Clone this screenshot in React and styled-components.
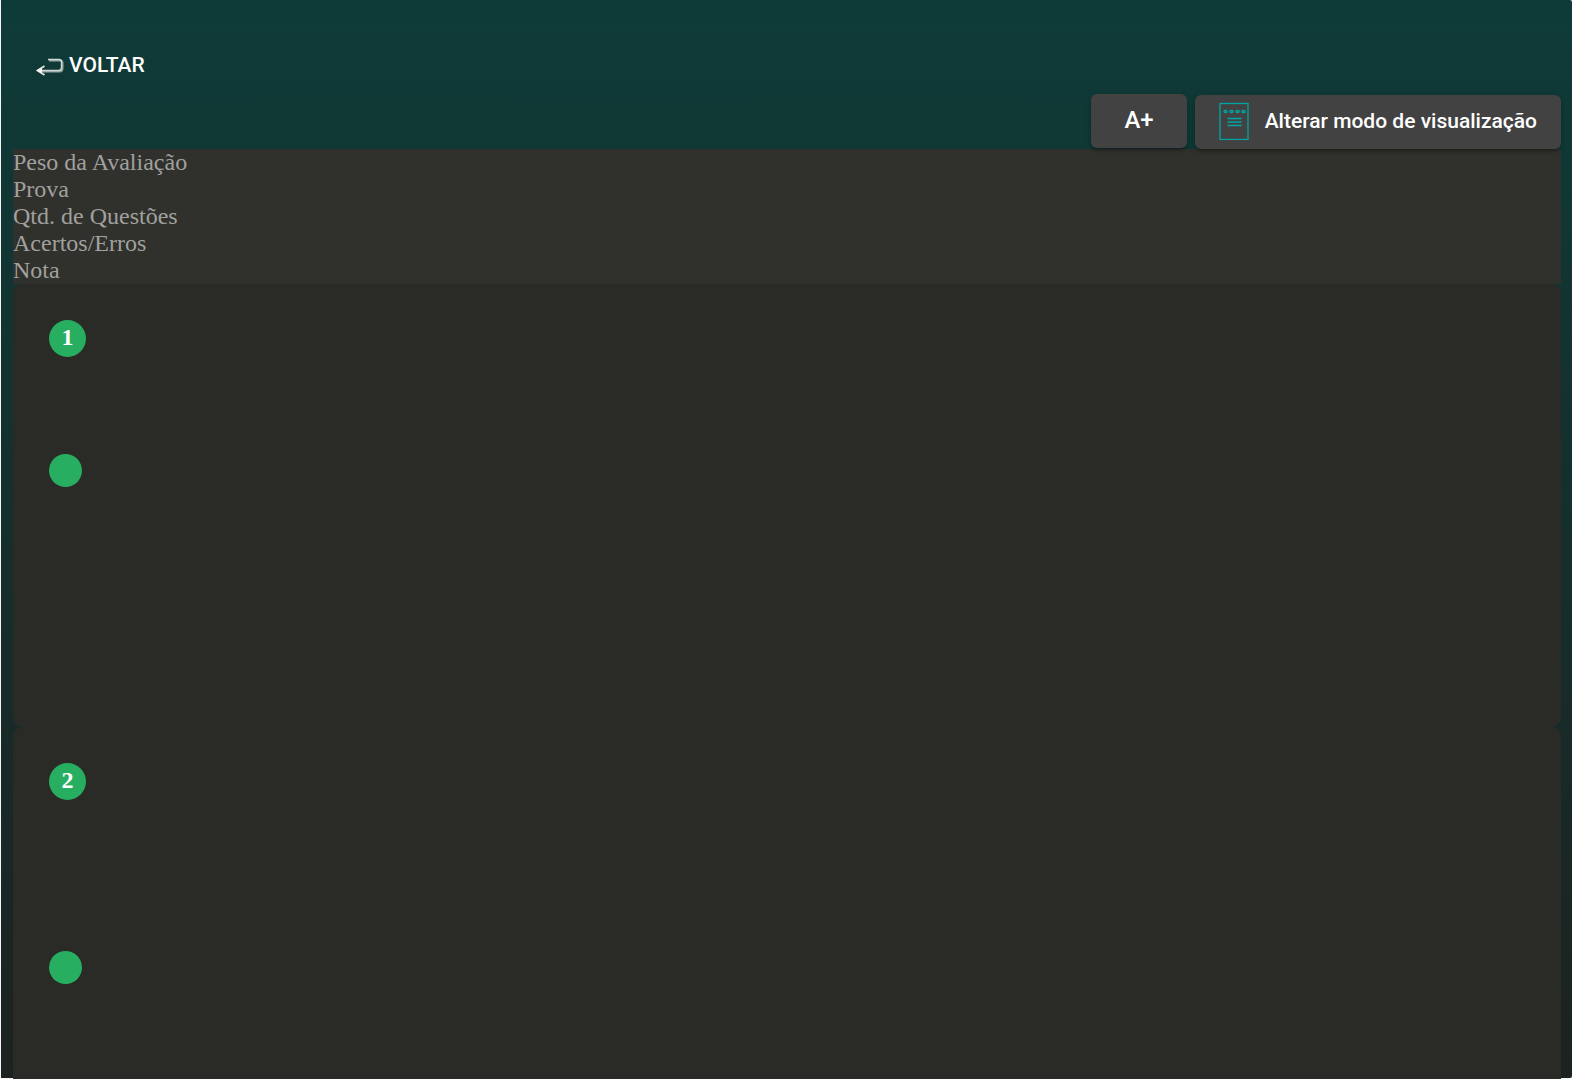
import React from 'react';
import styled, { createGlobalStyle } from 'styled-components';

const GlobalStyle = createGlobalStyle`
  * {
    box-sizing: border-box;
  }

  body {
    margin: 0;
    height: 100vh;
    overflow: hidden;
    background: #f5f5f5;
    font-family: 'Liberation Serif', serif;
  }
`;

const Page = styled.main`
  height: calc(100vh - 1px);
  margin-left: 1px;
  padding: 36px 11px 0 12px;
  border-radius: 0 2px 2px 0;
  background: linear-gradient(#0e3b38, #1c2221);
`;

const BackButton = styled.button`
  display: flex;
  align-items: center;
  gap: 5px;
  height: 58px;
  padding: 0 23px;
  border: none;
  background: transparent;
  color: #fff;
  font: 500 21px Roboto, sans-serif;
  cursor: pointer;
`;

const BackIcon = styled.svg`
  width: 28px;
  height: 20px;
  margin-top: 4px;
`;

const Toolbar = styled.div`
  display: flex;
  justify-content: flex-end;
  align-items: flex-end;
  gap: 8px;
  height: 55px;
`;

const RaisedButton = styled.button`
  display: flex;
  align-items: center;
  gap: 15px;
  height: 54px;
  padding: ${(props) => (props.$large ? '0 33px 2px' : '0 24px 2px')};
  ${(props) => props.$large && 'align-self: flex-start;'}
  border: none;
  border-radius: 6px;
  background: #424242;
  color: #fff;
  font: 500 ${(props) => (props.$large ? '24px' : '21px')} Roboto, sans-serif;
  box-shadow: 0 4px 2px -3px rgba(0, 0, 0, 0.2), 0 3px 3px rgba(0, 0, 0, 0.14),
    0 2px 7px rgba(0, 0, 0, 0.12);
  position: relative;
  cursor: pointer;
`;

const Summary = styled.section`
  background: #30302c;
  color: #a0a09e;
  font-size: 24px;
  line-height: 27px;
`;

const Question = styled.section`
  display: flex;
  flex-direction: column;
  align-items: flex-start;
  gap: ${(props) => props.$gap}px;
  min-height: 443px;
  padding: 36px;
  border-radius: 9px;
  background: #2a2a27;
`;

const Badge = styled.span`
  width: 37px;
  height: 37px;
  border-radius: 50%;
  background: #27ae60;
  color: #fff;
  font-size: 24px;
  font-weight: bold;
  line-height: 35px;
  text-align: center;
`;

const Dot = styled.span`
  width: 33px;
  height: 33px;
  border-radius: 50%;
  background: #27ae60;
`;

const summaryLabels = [
  'Peso da Avaliação',
  'Prova',
  'Qtd. de Questões',
  'Acertos/Erros',
  'Nota',
];

// gap is the room the statement takes between the number and the answer mark
const questions = [
  { number: 1, gap: 97 },
  { number: 2, gap: 151 },
];

const ReturnArrow = () => (
  <BackIcon viewBox="0 0 28 20" fill="none" strokeLinejoin="round" aria-hidden="true">
    <path
      d="M13 3.5H24Q26.5 3.5 26.5 6V11.5Q26.5 14.5 23.5 14.5H5"
      stroke="#8fa3a0"
      strokeWidth="2"
    />
    <path d="M12 2.5H23Q25.5 2.5 25.5 5V10.5Q25.5 13.5 22.5 13.5H2" stroke="#cfd8d6" strokeWidth="1.4" />
    <path d="M8.5 9L1.5 13.5L8.5 18" stroke="#d5dddb" strokeWidth="2" />
    <path d="M0 13.5L6 10.5V16.5Z" fill="#f4f4f4" />
  </BackIcon>
);

const Notepad = () => (
  <svg width="31" height="38" viewBox="0 0 31 38" fill="none" stroke="#00a5a5" strokeWidth="1.3" aria-hidden="true">
    <rect x="1" y="1.5" width="28" height="36" />
    {[6.5, 12.5, 18.5, 24.5].map((x) => (
      <rect key={x} x={x - 1.5} y="8.5" width="3" height="2" rx="1" strokeWidth="1.4" />
    ))}
    <path d="M8.5 16.5H22.5M8.5 20H22.5M8.5 23.5H22.5" />
  </svg>
);

const App = () => {
  return (
    <>
      <GlobalStyle />
      <Page>
        <BackButton type="button">
          <ReturnArrow />
          VOLTAR
        </BackButton>
        <Toolbar>
          <RaisedButton type="button" $large>A+</RaisedButton>
          <RaisedButton type="button">
            <Notepad />
            Alterar modo de visualização
          </RaisedButton>
        </Toolbar>
        <Summary>
          {summaryLabels.map((label) => (
            <div key={label}>{label}</div>
          ))}
        </Summary>
        {questions.map((question) => (
          <Question key={question.number} $gap={question.gap}>
            <Badge>{question.number}</Badge>
            <Dot />
          </Question>
        ))}
      </Page>
    </>
  );
};

export default App;
